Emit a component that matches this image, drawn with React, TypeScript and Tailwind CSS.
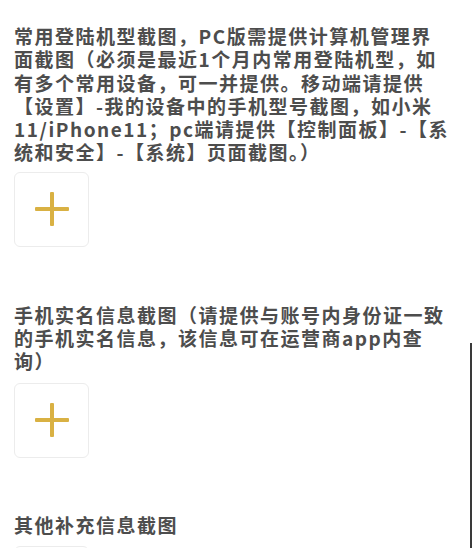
import React from "react";

const font = '"Noto Sans CJK SC", "Noto Sans", sans-serif';

function Lines({ lines }: { lines: string[] }) {
  return (
    <div
      className="text-[19px] leading-[23.3px] font-bold text-[#4d4d4d] tracking-[1.5px]"
      style={{ fontFamily: font }}
    >
      {lines.map((l, i) => (
        <div key={i} className="whitespace-nowrap">
          {l}
        </div>
      ))}
    </div>
  );
}

function UploadBox({ className = "" }: { className?: string }) {
  return (
    <div
      className={`w-[75px] h-[75px] rounded-[6px] border border-[#ececec] bg-white flex items-center justify-center ${className}`}
    >
      <svg width="34" height="34" viewBox="0 0 34 34">
        <rect x="0" y="15" width="34" height="4" rx="1" fill="#d9b143" />
        <rect x="15" y="0" width="4" height="34" rx="1" fill="#d9b143" />
      </svg>
    </div>
  );
}

export default function App() {
  return (
    <div className="relative w-[475px] h-[548px] overflow-hidden bg-white">
      <div className="pl-[14px] pt-[24px] flex flex-col">
        <Lines
          lines={[
            "常用登陆机型截图，PC版需提供计算机管理界",
            "面截图（必须是最近1个月内常用登陆机型，如",
            "有多个常用设备，可一并提供。移动端请提供",
            "【设置】-我的设备中的手机型号截图，如小米",
            "11/iPhone11；pc端请提供【控制面板】-【系",
            "统和安全】-【系统】页面截图。）",
          ]}
        />
        <UploadBox className="mt-[8px]" />
        <div className="mt-[56px]">
          <Lines
            lines={[
              "手机实名信息截图（请提供与账号内身份证一致",
              "的手机实名信息，该信息可在运营商app内查",
              "询）",
            ]}
          />
        </div>
        <UploadBox className="mt-[10px]" />
        <div className="mt-[55px]">
          <Lines lines={["其他补充信息截图"]} />
        </div>
        <UploadBox className="mt-[10px]" />
      </div>
      <div className="absolute left-[470px] top-[343px] bottom-0 w-[2px] bg-[#3a3a3a]" />
    </div>
  );
}
